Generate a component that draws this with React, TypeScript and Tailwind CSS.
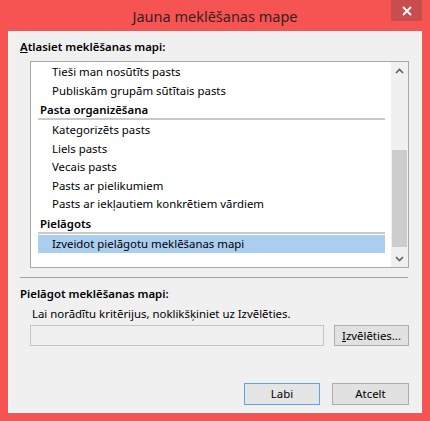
import React from 'react';

const font = { fontFamily: '"Noto Sans", "Open Sans", sans-serif' };

const Row: React.FC<{ text: string; selected?: boolean }> = ({ text, selected }) => (
  <div
    className={
      'h-[18.5px] leading-[18.5px] pl-[14px] whitespace-nowrap ' +
      (selected ? 'bg-[#aacdf0]' : '')
    }
  >
    {text}
  </div>
);

const Header: React.FC<{ text: string }> = ({ text }) => (
  <div className="mt-[1px]">
    <div className="h-[17px] leading-[17px] pl-[2px] font-semibold whitespace-nowrap">{text}</div>
    <div className="h-[2px] bg-[#c9c9c9]" />
  </div>
);

const Chevron: React.FC<{ up?: boolean }> = ({ up }) => (
  <svg width="9" height="6" viewBox="0 0 9 6">
    <polyline
      points={up ? '1,5 4.5,1.5 8,5' : '1,1 4.5,4.5 8,1'}
      fill="none"
      stroke="#606060"
      strokeWidth="1.6"
    />
  </svg>
);

export default function App() {
  return (
    <div
      className="w-[430px] h-[421px] bg-[#f65353] flex flex-col px-[8px] pb-[8px] text-[11.4px] text-black"
      style={font}
    >
      {/* title bar */}
      <div className="h-[31px] grid grid-cols-[31px_1fr_31px]">
        <div />
        <div className="text-center text-[14.5px] leading-[32px] text-[#3a2020]">
          Jauna meklēšanas mape
        </div>
        <div className="h-[21px] bg-[#c84e4e] flex items-center justify-center">
          <svg width="10" height="10" viewBox="0 0 10 10">
            <path d="M1 1 L9 9 M9 1 L1 9" stroke="white" strokeWidth="1.8" />
          </svg>
        </div>
      </div>

      {/* client */}
      <div className="flex-1 bg-[#f0f0f0] border border-[#fbfbfb] flex flex-col pt-[7px]">
        <div className="h-[16px] leading-[16px] ml-[11px] font-semibold">
          <span className="underline">A</span>tlasiet meklēšanas mapi:
        </div>

        <div className="mt-[6px] ml-[21px] mr-[12px] h-[207px] border border-[#a9a9a9] bg-white flex">
          <div className="flex-1 pt-[1px] pl-[7px] pr-[6px] overflow-hidden">
            <Row text="Tieši man nosūtīts pasts" />
            <Row text="Publiskām grupām sūtītais pasts" />
            <Header text="Pasta organizēšana" />
            <div className="mt-[1px]">
              <Row text="Kategorizēts pasts" />
              <Row text="Liels pasts" />
              <Row text="Vecais pasts" />
              <Row text="Pasts ar pielikumiem" />
              <Row text="Pasts ar iekļautiem konkrētiem vārdiem" />
            </div>
            <Header text="Pielāgots" />
            <div className="mt-[1px]">
              <Row text="Izveidot pielāgotu meklēšanas mapi" selected />
            </div>
          </div>
          <div className="w-[17px] bg-[#f0f0f0] flex flex-col">
            <div className="h-[17px] flex items-center justify-center">
              <Chevron up />
            </div>
            <div className="flex-1 flex flex-col">
              <div className="h-[71px]" />
              <div className="h-[97px] mx-[1px] bg-[#cdcdcd]" />
            </div>
            <div className="h-[17px] flex items-center justify-center">
              <Chevron />
            </div>
          </div>
        </div>

        <div className="mt-[9px] ml-[11px] mr-[13px] h-px bg-[#a0a0a0]" />

        <div className="mt-[8px] h-[16px] leading-[16px] ml-[11px] font-semibold">
          Pielāgot meklēšanas mapi:
        </div>
        <div className="mt-[4px] h-[16px] leading-[16px] ml-[23px]">
          Lai norādītu kritērijus, noklikšķiniet uz Izvēlēties.
        </div>
        <div className="mt-[3px] ml-[21px] mr-[12px] h-[21px] flex gap-[10px]">
          <div className="w-[294px] border border-[#c4c4c4] bg-[#f0f0f0]" />
          <div className="flex-1 border border-[#adadad] bg-[#e1e1e1] flex items-center justify-center">
            <span>
              <span className="underline">I</span>zvēlēties...
            </span>
          </div>
        </div>

        <div className="mt-[37px] mr-[12px] flex justify-end gap-[12px]">
          <div className="w-[76px] h-[22px] border border-[#5ea2e8] bg-[#e5e5e5] flex items-center justify-center">
            Labi
          </div>
          <div className="w-[77px] h-[22px] border border-[#adadad] bg-[#e1e1e1] flex items-center justify-center">
            Atcelt
          </div>
        </div>
      </div>
    </div>
  );
}
